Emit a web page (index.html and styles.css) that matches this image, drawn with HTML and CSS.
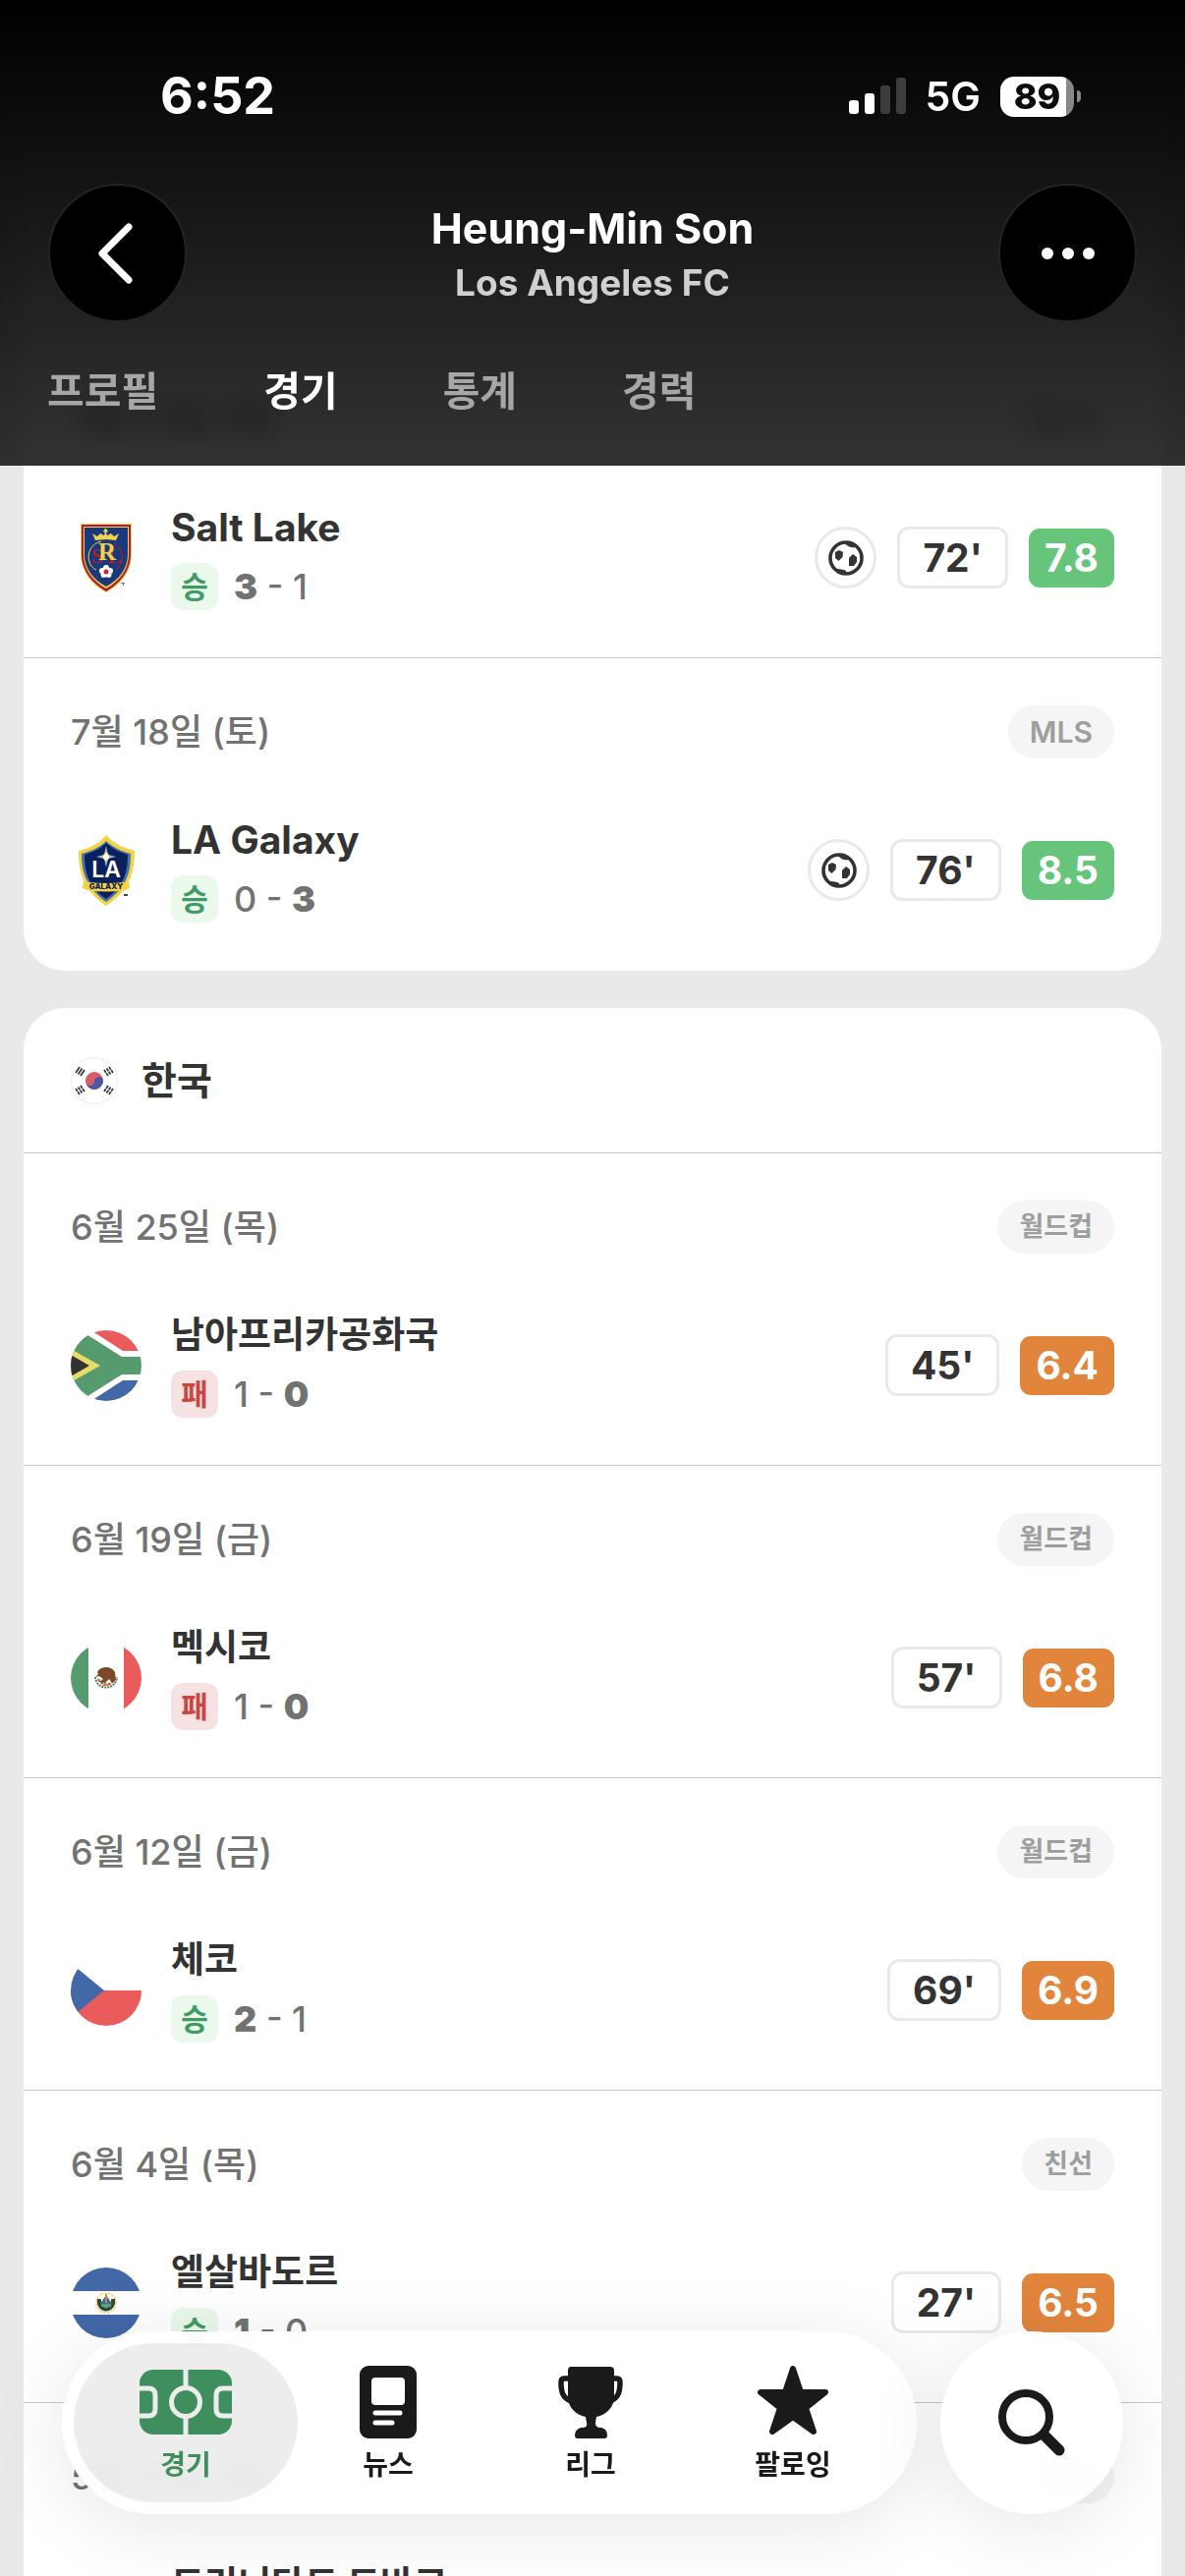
FILE: index.html
```html
<!DOCTYPE html>
<html lang="ko">
<head>
<meta charset="utf-8">
<meta name="viewport" content="width=device-width, initial-scale=1">
<title>Heung-Min Son - 경기</title>
<link rel="stylesheet" href="styles.css">
</head>
<body>
<svg class="defs" aria-hidden="true">
  <defs>
    <clipPath id="disc"><circle cx="36" cy="36" r="36"/></clipPath>
    <symbol id="ball" viewBox="0 0 36 36">
      <circle cx="18" cy="18" r="16" fill="none" stroke="#333" stroke-width="3.6"/>
      <path fill="#333" d="M18 1c6 0 9 2 11 4l-3 2.500-5-1-4-3zM7 12l4-2 4 2-.5 5-4 4L7 18zM21 18l4-4 4 3v5l-3 4h-5zM7 31l3-2 6 1 2 1v4c-5 0-9-2-11-4z"/>
    </symbol>
  </defs>
</svg>

<div class="app">
  <header class="header">
    <div class="status">
      <span class="clock">6:52</span>
      <span class="status-right">
        <svg class="signal" viewBox="0 0 58 38" aria-hidden="true">
          <rect x="0" y="23" width="10" height="14" rx="3" fill="#fff"/>
          <rect x="16" y="16" width="10" height="21" rx="3" fill="#fff"/>
          <rect x="32" y="8" width="10" height="29" rx="3" fill="#3d3d3d"/>
          <rect x="48" y="0" width="10" height="37" rx="3" fill="#3d3d3d"/>
        </svg>
        <span class="network">5G</span>
        <span class="battery">89</span>
      </span>
    </div>
    <div class="titlebar">
      <button class="round" type="button" aria-label="뒤로">
        <svg viewBox="0 0 42 62" width="42" height="62"><path d="M32 4 5 31l27 27" fill="none" stroke="#fff" stroke-width="7" stroke-linecap="round" stroke-linejoin="round"/></svg>
      </button>
      <div class="titles">
        <h1 class="player">Heung-Min Son</h1>
        <p class="club">Los Angeles FC</p>
      </div>
      <button class="round" type="button" aria-label="더보기">
        <svg viewBox="0 0 54 12" width="54" height="12" fill="#fff"><circle cx="6" cy="6" r="6"/><circle cx="27" cy="6" r="6"/><circle cx="48" cy="6" r="6"/></svg>
      </button>
    </div>
    <nav class="tabs">
      <a class="tab" href="#profile">프로필</a>
      <a class="tab tab-active" href="#matches">경기</a>
      <a class="tab" href="#stats">통계</a>
      <a class="tab" href="#career">경력</a>
    </nav>
  </header>

  <main class="feed">
    <section class="card card-first">
      <ul class="matches">
        <li class="match">
          <div class="meta"><span class="date">7월 23일 (목)</span><span class="league league-code">MLS</span></div>
          <div class="result">
            <svg class="logo" viewBox="0 0 72 72" role="img" aria-label="Real Salt Lake">
              <path fill="#f0d24c" d="M10 1h52v31c0 18-12 32-26 39C22 64 10 50 10 32z"/>
              <path fill="#a81f35" d="M11 2h50v30c0 17-11 30-25 38C22 62 11 49 11 32z"/>
              <path fill="#f0d24c" d="M13 4h46v28c0 16-10 28-23 35C23 60 13 48 13 32z"/>
              <path fill="#183a7c" d="M14 5h44v27c0 15-9 26-22 33C23 58 14 47 14 32z"/>
              <path fill="#f0d24c" d="m25 18-3-7 5 3 3-3 4 2 1-3-2-1 2-3h1l2 3-2 1 1 3 4-2 3 3 5-3-3 7-10-1z"/>
              <path d="M31 19c-10 2-15 12-12 21 1 4 4 7 7 8" fill="none" stroke="#f0d24c"/>
              <path d="M44 21c9 5 11 17 5 24l-3 3" fill="none" stroke="#a81f35" stroke-width="1.200" stroke-dasharray="4 1"/>
              <text x="21" y="41" class="rsl-sl">S</text><text x="37" y="41" class="rsl-sl">L</text>
              <text x="28" y="38" class="rsl-r">R</text>
              <g fill="#fff"><circle cx="36" cy="46" r="3"/><circle cx="40" cy="49" r="3"/><circle cx="38.500" cy="53" r="3"/><circle cx="33.500" cy="53" r="3"/><circle cx="32" cy="49" r="3"/></g>
              <circle cx="36" cy="50" r="2.500" fill="#c22a48"/>
              <path fill="#5b77a8" d="M51 61h4v1h-1v2h-1v-2h-2z"/>
            </svg>
            <div class="team">
              <h3 class="name">Salt Lake</h3>
              <p class="score"><span class="badge win">승</span><span><b>3</b> - 1</span></p>
            </div>
            <span class="goal" role="img" aria-label="골"><svg width="36" height="36"><use href="#ball"/></svg></span>
            <span class="minutes">72'</span>
            <span class="rating good">7.8</span>
          </div>
        </li>
        <li class="match">
          <div class="meta"><span class="date">7월 18일 (토)</span><span class="league league-code">MLS</span></div>
          <div class="result">
            <svg class="logo" viewBox="0 0 72 72" role="img" aria-label="LA Galaxy">
              <path fill="#f5d23f" d="M36 0c7 8 17 13 29 16 0 20-4 40-29 56C12 56 8 36 8 16 20 13 30 8 36 0z"/>
              <path fill="#4172b8" d="M36 6c7 6 14 10 25 13 0 17-3 34-25 49C15 53 11 36 11 19 22 16 30 12 36 6z"/>
              <path fill="#0a205a" d="M36 8c7 6 13 9 22 12 0 16-3 32-22 45C17 52 14 36 14 20 23 17 30 14 36 8z"/>
              <path fill="#8dbbe8" d="M36 11l2 9 8 2-8 2-2 9-2-9-8-2 8-2z"/>
              <path fill="#fff" stroke="#f5b83f" d="m36 17 4 5-4 5-4-5z"/>
              <text x="36" y="43" class="gal-la">LA</text>
              <path fill="#f5d23f" d="m13 47 5 1q18 2 36 0l5-1 1 7-5 2q-19 3-38 0l-5-2z"/>
              <text x="36" y="55" class="gal-name">GALAXY</text>
              <path fill="#444" d="M54 60h4v2h-4z"/>
            </svg>
            <div class="team">
              <h3 class="name">LA Galaxy</h3>
              <p class="score"><span class="badge win">승</span><span>0 - <b>3</b></span></p>
            </div>
            <span class="goal" role="img" aria-label="골"><svg width="36" height="36"><use href="#ball"/></svg></span>
            <span class="minutes">76'</span>
            <span class="rating good">8.5</span>
          </div>
        </li>
      </ul>
    </section>

    <section class="card">
      <header class="card-head">
        <svg class="flag-small" viewBox="0 0 48 48" role="img" aria-label="대한민국 국기">
          <circle cx="24" cy="24" r="23.500" fill="#fff" stroke="#ececec"/>
          <circle cx="24" cy="24" r="9" fill="#dd5c66"/>
          <path fill="#4a5aa5" d="M15 24a4.500 4.500 0 0 0 9 1 4.500 4.500 0 0 1 9-1 9 9 0 0 1-18 0z"/>
          <g stroke="#333b4a" stroke-width="1.800">
            <path d="m5 16 4-6M7.500 17.500l4-6M10 19l4-6"/>
            <path d="m43 16-4-6M40.500 17.500l-4-6M38 19l-4-6" stroke-dasharray="3.200 .8"/>
            <path d="m5 32 4 6M7.500 30.500l4 6M10 29l4 6" stroke-dasharray="3.200 .8"/>
            <path d="m43 32-4 6M40.500 30.500l-4 6M38 29l-4 6" stroke-dasharray="3.200 .8"/>
          </g>
        </svg>
        <h2 class="country">한국</h2>
      </header>
      <ul class="matches">
        <li class="match">
          <div class="meta"><span class="date">6월 25일 (목)</span><span class="league">월드컵</span></div>
          <div class="result">
            <svg class="logo" viewBox="0 0 72 72" role="img" aria-label="남아프리카공화국 국기">
              <g clip-path="url(#disc)">
                <path fill="#fff" d="M0 0h72v72H0z"/>
                <path fill="#ea5b5b" d="M16 0h56v21H53L16-3z"/>
                <path fill="#4268a8" d="M16 72h56V51H53L16 75z"/>
                <path fill="#559b6e" d="M0-6 52 27h20v18H52L0 78z"/>
                <path fill="#e8dc68" d="M0 19v34l30-17z"/>
                <path fill="#333" d="M0 25v22l19-11z"/>
              </g>
            </svg>
            <div class="team">
              <h3 class="name name-ko">남아프리카공화국</h3>
              <p class="score"><span class="badge loss">패</span><span>1 - <b>0</b></span></p>
            </div>
            <span class="minutes">45'</span>
            <span class="rating fair">6.4</span>
          </div>
        </li>
        <li class="match">
          <div class="meta"><span class="date">6월 19일 (금)</span><span class="league">월드컵</span></div>
          <div class="result">
            <svg class="logo" viewBox="0 0 72 72" role="img" aria-label="멕시코 국기">
              <g clip-path="url(#disc)">
                <path fill="#fff" d="M0 0h72v72H0z"/>
                <path fill="#559b6e" d="M0 0h18v72H0z"/>
                <path fill="#ea5b5b" d="M54 0h18v72H54z"/>
              </g>
              <path fill="none" stroke="#55795b" stroke-width="2" stroke-dasharray="2 1" d="M25 35c1 14 21 14 22 0"/>
              <path fill="none" stroke="#8a6a3a" stroke-width="2" stroke-dasharray="3 1" d="M28 37c3 7 13 7 16 1"/>
              <path fill="#7b4828" d="M27 30c3-6 14-7 18 0l1 8-4 3-3-4-4 4-6-1 4-3-4-3-4 1 3-3z"/>
              <path fill="#dc813e" d="M33 42h6v2h-6z"/>
            </svg>
            <div class="team">
              <h3 class="name name-ko">멕시코</h3>
              <p class="score"><span class="badge loss">패</span><span>1 - <b>0</b></span></p>
            </div>
            <span class="minutes">57'</span>
            <span class="rating fair">6.8</span>
          </div>
        </li>
        <li class="match">
          <div class="meta"><span class="date">6월 12일 (금)</span><span class="league">월드컵</span></div>
          <div class="result">
            <svg class="logo" viewBox="0 0 72 72" role="img" aria-label="체코 국기">
              <g clip-path="url(#disc)">
                <path fill="#fff" d="M0 0h72v36H0z"/>
                <path fill="#ea5b5b" d="M0 36h72v36H0z"/>
                <path fill="#4268a8" d="M0 8v56l34-28z"/>
              </g>
            </svg>
            <div class="team">
              <h3 class="name name-ko">체코</h3>
              <p class="score"><span class="badge win">승</span><span><b>2</b> - 1</span></p>
            </div>
            <span class="minutes">69'</span>
            <span class="rating fair">6.9</span>
          </div>
        </li>
        <li class="match">
          <div class="meta"><span class="date">6월 4일 (목)</span><span class="league">친선</span></div>
          <div class="result">
            <svg class="logo" viewBox="0 0 72 72" role="img" aria-label="엘살바도르 국기">
              <g clip-path="url(#disc)">
                <path fill="#fff" d="M0 0h72v72H0z"/>
                <path fill="#4268a8" d="M0 0h72v24H0zM0 48h72v24H0z"/>
              </g>
              <circle cx="36" cy="36" r="10" fill="none" stroke="#e8dc68" stroke-width="1.500" stroke-dasharray="3 1"/>
              <path fill="none" stroke="#2f4a3c" stroke-width="4" d="M29 32c-2 14 16 14 14 0"/>
              <path fill="#4268a8" d="m36 28 6 9H30z"/><path fill="#55a86e" d="M31 37h10v3H31z"/><path stroke="#c09030" stroke-width="2" d="M36 27v9"/>
            </svg>
            <div class="team">
              <h3 class="name name-ko">엘살바도르</h3>
              <p class="score"><span class="badge win">승</span><span><b>1</b> - 0</span></p>
            </div>
            <span class="minutes">27'</span>
            <span class="rating fair">6.5</span>
          </div>
        </li>
        <li class="match">
          <div class="meta"><span class="date">5월 31일 (일)</span><span class="league">친선</span></div>
          <div class="result">
            <svg class="logo" viewBox="0 0 72 72" role="img" aria-label="트리니다드 토바고 국기">
              <g clip-path="url(#disc)">
                <path fill="#ea5b5b" d="M0 0h72v72H0z"/>
                <path stroke="#fff" stroke-width="22" d="m0 0 72 72"/>
                <path stroke="#333" stroke-width="14" d="m0 0 72 72"/>
              </g>
            </svg>
            <div class="team">
              <h3 class="name name-ko">트리니다드 토바고</h3>
              <p class="score"><span class="badge win">승</span></p>
            </div>
          </div>
        </li>
      </ul>
    </section>
  </main>

  <div class="dock">
    <nav class="dock-bar">
      <a class="dock-item dock-active" href="#matches">
        <svg viewBox="0 0 94 76" width="94" height="76" aria-hidden="true">
          <rect y="5" width="94" height="66" rx="14" fill="#3f8f5e"/>
          <g fill="none" stroke="#ececec" stroke-width="5"><path d="M47 5v18M47 54v17M0 24h9q7 0 7 7v14q0 7-7 7H0M94 24h-9q-7 0-7 7v14q0 7 7 7h9"/><circle cx="47" cy="38" r="14.500"/></g>
        </svg>
        <span>경기</span>
      </a>
      <a class="dock-item" href="#news">
        <svg viewBox="0 0 58 76" width="58" height="76" aria-hidden="true">
          <rect y="1" width="58" height="74" rx="9" fill="#1a1a1a"/>
          <rect x="12" y="13" width="34" height="28" rx="4" fill="#fff"/>
          <path d="M16 49h25M16 59h17" stroke="#fff" stroke-width="5" stroke-linecap="round"/>
        </svg>
        <span>뉴스</span>
      </a>
      <a class="dock-item" href="#leagues">
        <svg viewBox="0 0 66 76" width="66" height="76" aria-hidden="true">
          <path fill="#1a1a1a" d="M13 2h40q4 0 4 4v27c0 10-8 18-18 20l-1 6c0 4 2 5 6 5q6 1 6 8 0 3-3 3H20q-3 0-3-3 0-6 6-8c5 0 7-1 6-5l-1-6C18 51 10 43 10 33V6q0-4 3-4z"/>
          <path fill="none" stroke="#1a1a1a" stroke-width="5.500" d="M11 14H6q-3 0-3 4c0 10 2 16 10 19M55 14h5q3 0 3 4c0 10-2 16-10 19"/>
        </svg>
        <span>리그</span>
      </a>
      <a class="dock-item" href="#following">
        <svg viewBox="0 0 72 76" width="72" height="76" aria-hidden="true">
          <path fill="#1a1a1a" stroke="#1a1a1a" stroke-width="6" stroke-linejoin="round" d="m36 4 8 24h25L49 44l8 24-21-15-21 15 8-24L3 28h25z"/>
        </svg>
        <span>팔로잉</span>
      </a>
    </nav>
    <button class="dock-search" type="button" aria-label="검색">
      <svg viewBox="0 0 68 70" width="68" height="70"><circle cx="28" cy="29" r="24" fill="none" stroke="#1a1a1a" stroke-width="8"/><path d="m47 48 15 15" stroke="#1a1a1a" stroke-width="11" stroke-linecap="round"/></svg>
    </button>
  </div>
</div>
</body>
</html>
```

FILE: styles.css
```css
*, *::before, *::after { box-sizing: border-box; }

body {
  margin: 0;
  background: #e9e9e9;
  color: #333;
  font-family: Inter, "Noto Sans CJK KR", sans-serif;
}

h1, h2, h3, p, ul { margin: 0; padding: 0; }
ul { list-style: none; }
a { color: inherit; text-decoration: none; }
button { border: 0; padding: 0; font: inherit; cursor: pointer; }
svg { display: block; flex: none; }
.defs { position: absolute; width: 0; height: 0; }

/* The header and the feed share one grid cell, so the feed runs under it. */
.app {
  position: relative;
  display: grid;
  height: 100vh;
  overflow: hidden;
}
.header, .feed { grid-area: 1 / 1; min-width: 0; }

/* Header */
.header {
  z-index: 2;
  align-self: start;
  color: #fff;
  background: linear-gradient(rgb(0 0 0), rgb(0 0 0 / .8));
  backdrop-filter: blur(12px);
}
.status {
  display: flex;
  align-items: center;
  justify-content: space-between;
  padding: 66px 113px 57px 163px;
  line-height: 64px;
}
.clock { font-size: 52px; font-weight: 700; }
.status-right { display: flex; align-items: center; gap: 20px; }
.signal { width: 58px; height: 38px; }
.network { font-size: 41px; font-weight: 600; }
.battery {
  position: relative;
  width: 75px;
  border-radius: 14px;
  background: linear-gradient(90deg, #fff 67px, #888 67px);
  color: #0c0c0c;
  font-size: 36px;
  font-weight: 800;
  line-height: 41px;
  text-align: center;
}
.battery::after {
  content: "";
  position: absolute;
  top: 14px;
  left: 78px;
  width: 4px;
  height: 12px;
  border-radius: 0 6px 6px 0;
  background: #888;
}
.titlebar {
  display: flex;
  align-items: center;
  justify-content: space-between;
  padding: 0 49px;
}
.round {
  display: grid;
  place-items: center;
  width: 141px;
  height: 141px;
  border: 2px solid #232323;
  border-radius: 50%;
  background: #000;
}
.titles { padding-top: 4px; line-height: 56px; text-align: center; }
.player { font-size: 43px; font-weight: 700; line-height: 56px; }
.club { color: #d0d0d0; font-size: 37px; font-weight: 700; }
.tabs {
  display: flex;
  gap: 107px;
  padding: 28px 48px 34px;
  font-size: 41px;
  font-weight: 600;
  line-height: 84px;
}
.tab { color: #a6a6a6; }
.tab-active { color: #fff; font-weight: 700; }

/* Match cards */
.feed {
  display: flex;
  flex-direction: column;
  gap: 38px;
  padding: 0 24px;
  overflow: hidden;
}
.card { flex: none; border-radius: 42px; background: #fff; }
.card-first { padding-top: 352px; }
.card-head {
  display: flex;
  align-items: center;
  gap: 24px;
  height: 148px;
  padding: 0 48px;
  border-bottom: 1px solid #c6c6c6;
}
.flag-small { width: 48px; height: 48px; }
.country { font-size: 39px; font-weight: 700; line-height: 56px; }
.match {
  display: flex;
  flex-direction: column;
  gap: 60px;
  padding: 48px 48px 48px;
  border-bottom: 1px solid #c6c6c6;
}
.match:last-child { border-bottom-color: transparent; }
.meta {
  display: flex;
  align-items: center;
  justify-content: space-between;
  line-height: 54px;
}
.date { color: #727272; font-size: 36px; font-weight: 500; }
.league {
  padding: 0 22px;
  border-radius: 27px;
  background: #f5f5f5;
  color: #9e9e9e;
  font-size: 27px;
  font-weight: 700;
}
.league-code { font-size: 30px; font-weight: 600; }
.result { display: flex; align-items: center; gap: 21px; }
.logo { width: 72px; height: 72px; }
.team {
  display: flex;
  flex: 1;
  flex-direction: column;
  gap: 13px;
  min-width: 0;
  padding-left: 9px;
}
.name { font-size: 39px; font-weight: 700; line-height: 46px; white-space: nowrap; }
.name-ko { font-size: 37px; }
.score {
  display: flex;
  gap: 16px;
  color: #727272;
  font-size: 36px;
  font-weight: 500;
  line-height: 48px;
}
.score b { font-weight: 900; }
.badge {
  width: 48px;
  border-radius: 12px;
  font-size: 30px;
  font-weight: 600;
  text-align: center;
}
.win { background: #eaf9ec; color: #3f9a63; }
.loss { background: #f7e2e3; color: #cc4540; }
.goal {
  display: grid;
  place-items: center;
  width: 63px;
  height: 63px;
  border: 3px solid #e9e9e9;
  border-radius: 50%;
}
.minutes, .rating { font-size: 39px; font-weight: 700; }
.minutes {
  padding: 0 23px;
  border: 3px solid #e9e9e9;
  border-radius: 12px;
  line-height: 57px;
}
.rating {
  padding: 0 16px;
  border-radius: 11px;
  color: #fff;
  line-height: 60px;
}
.good { background: #66c57b; }
.fair { background: #e1853d; }

/* Lettering inside the club crests */
.rsl-r, .rsl-sl { font-family: "Liberation Serif", serif; font-weight: 700; }
.rsl-r { fill: #f0d24c; font-size: 25px; }
.rsl-sl { fill: #a81f35; font-size: 22px; }
.gal-la, .gal-name { font-family: Inter, sans-serif; text-anchor: middle; }
.gal-la { fill: #fff; font-size: 23px; font-weight: 600; }
.gal-name { fill: #0a205a; font-size: 8px; font-weight: 800; }

/* Floating dock */
.dock {
  position: absolute;
  right: 63px;
  bottom: 63px;
  left: 63px;
  z-index: 2;
  display: flex;
  gap: 24px;
}
.dock-bar, .dock-search {
  height: 186px;
  border-radius: 93px;
  background: rgb(255 255 255 / .94);
  box-shadow: 0 12px 80px rgb(0 0 0 / .1);
  backdrop-filter: blur(8px);
}
.dock-bar {
  display: flex;
  flex: 1;
  align-items: center;
  padding: 0 23px;
}
.dock-item {
  display: flex;
  flex: 1;
  flex-direction: column;
  align-items: center;
  gap: 6px;
  height: 162px;
  margin: 0 -11px;
  padding-top: 22px;
  border-radius: 81px;
  color: #1a1a1a;
  font-size: 28px;
  font-weight: 600;
  line-height: 40px;
}
.dock-active { background: rgb(0 0 0 / .07); color: #3f8f5e; }
.dock-search {
  display: grid;
  flex: none;
  place-items: center;
  width: 186px;
}
```
